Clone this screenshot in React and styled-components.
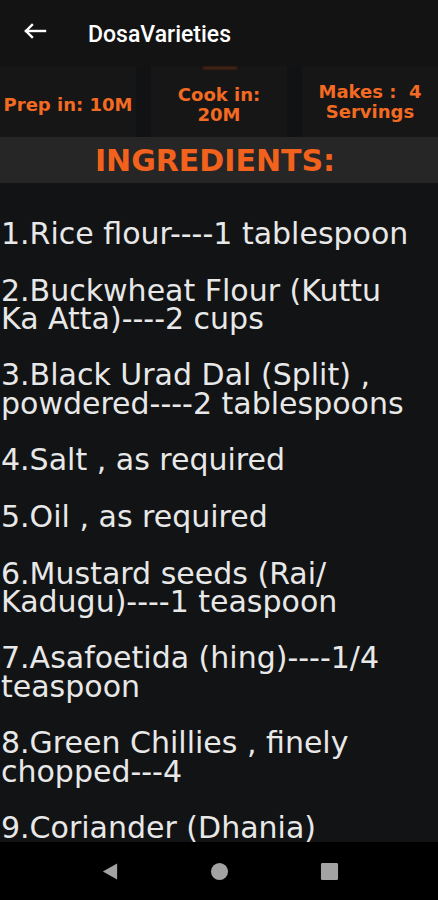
import React from 'react';
import styled, { createGlobalStyle } from 'styled-components';

const GlobalStyle = createGlobalStyle`
  html, body {
    margin: 0;
    padding: 0;
    background: #121314;
  }
  * {
    box-sizing: border-box;
  }
`;

const Screen = styled.div`
  width: 438px;
  height: 900px;
  display: flex;
  flex-direction: column;
  background: #121314;
  overflow: hidden;
`;

const Header = styled.div`
  height: 66px;
  flex-shrink: 0;
  display: flex;
  align-items: center;
  padding-left: 23px;
  background: #131313;
`;

const BackButton = styled.div`
  width: 24px;
  height: 24px;
  display: flex;
  align-items: center;
  justify-content: center;
  margin-top: -4px;

  svg {
    width: 24px;
    height: 16px;
  }
`;

const Title = styled.div`
  margin-left: 41px;
  margin-top: 2px;
  font-family: Roboto, 'Noto Sans', sans-serif;
  font-weight: 500;
  font-size: 23px;
  color: #ffffff;
`;

const StatsRow = styled.div`
  position: relative;
  height: 71px;
  flex-shrink: 0;
  display: grid;
  grid-template-columns: repeat(3, 1fr);
  column-gap: 15px;
  background: #101214;
`;

// the thin glowing tab marker over the middle cell
const Indicator = styled.div`
  position: absolute;
  top: 1px;
  left: 203px;
  width: 34px;
  height: 2px;
  background: #5e2a12;
  filter: blur(0.8px);
`;

const StatCell = styled.div`
  display: flex;
  align-items: center;
  justify-content: center;
  text-align: center;
  padding-top: ${({ $raised }) => ($raised ? '0' : '7px')};
  background: #161616;
  font-family: 'DejaVu Sans', sans-serif;
  font-weight: bold;
  font-size: 18px;
  line-height: 20px;
  color: #f36a22;
  white-space: pre;
`;

const Band = styled.div`
  height: 46px;
  flex-shrink: 0;
  display: flex;
  align-items: center;
  justify-content: center;
  padding-right: 8px;
  background: #262626;
  font-family: 'DejaVu Sans', sans-serif;
  font-weight: bold;
  font-size: 30px;
  color: #f2621c;
`;

const List = styled.div`
  flex: 1;
  overflow: hidden;
  padding: 37px 22px 0 1px;
  background: #121314;
`;

const Item = styled.p`
  margin: 0 0 28.3px;
  font-family: 'DejaVu Sans', sans-serif;
  font-size: 30px;
  line-height: 28.3px;
  color: #e8e8e8;
`;

const NavBar = styled.div`
  height: 58px;
  flex-shrink: 0;
  display: flex;
  align-items: center;
  justify-content: center;
  gap: 91px;
  background: #000000;

  svg {
    width: 19px;
    height: 19px;
    fill: #a3a3a3;
  }
`;

const ingredients = [
  '1.Rice flour----1 tablespoon',
  '2.Buckwheat Flour (Kuttu Ka Atta)----2 cups',
  '3.Black Urad Dal (Split) , powdered----2 tablespoons',
  '4.Salt , as required',
  '5.Oil , as required',
  <>6.Mustard seeds (Rai/<wbr />Kadugu)----1 teaspoon</>,
  '7.Asafoetida (hing)----1/4 teaspoon',
  '8.Green Chillies , finely chopped---4',
  '9.Coriander (Dhania)',
];

const App = () => {
  return (
    <Screen>
      <GlobalStyle />
      <Header>
        <BackButton>
          <svg viewBox="0 0 24 16" fill="none" stroke="#ffffff" strokeWidth="2.4" strokeLinecap="square">
            <path d="M3 8h19" />
            <path d="M9 2L3 8l6 6" />
          </svg>
        </BackButton>
        <Title>DosaVarieties</Title>
      </Header>

      <StatsRow>
        <Indicator />
        <StatCell>Prep in: 10M</StatCell>
        <StatCell>{'Cook in:\n20M'}</StatCell>
        <StatCell $raised>{'Makes :  4\nServings'}</StatCell>
      </StatsRow>

      <Band>INGREDIENTS:</Band>

      <List>
        {ingredients.map((text, i) => (
          <Item key={i}>{text}</Item>
        ))}
      </List>

      <NavBar>
        <svg viewBox="0 0 20 20">
          <path d="M18 1.5v17L3 10z" />
        </svg>
        <svg viewBox="0 0 20 20">
          <circle cx="10" cy="10" r="9" />
        </svg>
        <svg viewBox="0 0 20 20">
          <rect x="1" y="1" width="18" height="18" rx="1.5" />
        </svg>
      </NavBar>
    </Screen>
  );
};

export default App;
